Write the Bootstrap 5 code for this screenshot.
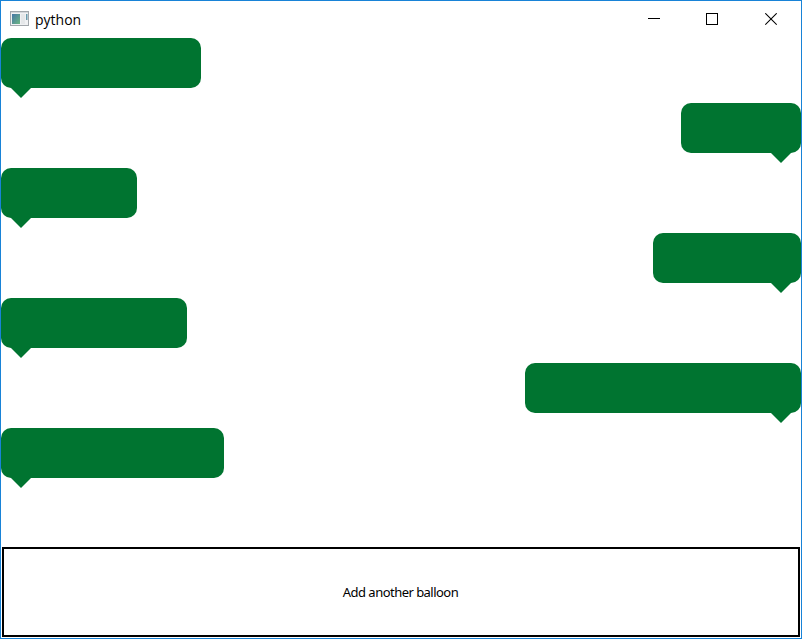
<!DOCTYPE html>
<html lang="en">
<head>
<meta charset="utf-8">
<title>python</title>
<link href="https://cdn.jsdelivr.net/npm/bootstrap@5.3.0/dist/css/bootstrap.min.css" rel="stylesheet">
<style>
  body { font-family: "Open Sans", "Noto Sans", sans-serif; color: #000; }
  .window { border: 1px solid #1883d7; }
  .titlebar { height: 37px; padding-left: 9px; }
  .app-icon { margin-right: 6px; }
  .title-text { font-size: 14px; line-height: 20px; letter-spacing: 0; }
  .win-btn { width: 58px; height: 37px; border-radius: 0; }
  .win-btn:last-child { width: 60px; }
  .balloons { gap: 15px; }
  .balloon { height: 50px; border-radius: 10px; background: #007430; }
  .balloon::after {
    content: ""; position: absolute; top: 50px; left: 10px;
    border: 10px solid transparent; border-top-color: #007430; border-bottom: 0;
  }
  .balloon.sent::after { left: auto; right: 10px; }
  .w-a { width: 200px; } .w-b { width: 120px; } .w-c { width: 136px; }
  .w-d { width: 148px; } .w-e { width: 186px; } .w-f { width: 276px; } .w-g { width: 223px; }
  .add-btn {
    height: 90px; margin: 0 1px 1px; padding: 2px 1px 0 0; border: 2px solid #000; border-radius: 0;
    font-family: "Noto Sans", sans-serif; font-size: 13px; letter-spacing: -.53px; color: #000;
  }
</style>
<script src="https://cdn.jsdelivr.net/npm/bootstrap@5.3.0/dist/js/bootstrap.bundle.min.js"></script>
</head>
<body class="bg-white overflow-hidden">
<div class="window vh-100 d-flex flex-column">
  <header class="titlebar d-flex align-items-center flex-shrink-0">
    <svg class="app-icon" width="19" height="17" viewBox="0 0 19 17">
      <defs><linearGradient id="pane" x1="0" y1="0" x2="1" y2="1"><stop offset="0" stop-color="#4576a6"/><stop offset="1" stop-color="#6db783"/></linearGradient></defs>
      <rect x=".5" y=".5" width="18" height="14" fill="#f0f1f3" stroke="#a2a7ac"/>
      <path d="M1 1.5h17" stroke="#d5d8dc"/>
      <rect x="2" y="3" width="8" height="10" fill="url(#pane)"/>
      <rect x="11" y="3" width="4" height="10" fill="#e5e7e9"/>
      <rect x="16" y="3" width="1.5" height="6" fill="#6a9bad"/>
    </svg>
    <span class="title-text">python</span>
    <div class="d-flex ms-auto">
      <button class="win-btn btn border-0 p-0 d-flex align-items-center justify-content-center" aria-label="Minimize">
        <svg width="12" height="13"><path d="M0 5.5h12" stroke="#000"/></svg>
      </button>
      <button class="win-btn btn border-0 p-0 d-flex align-items-center justify-content-center" aria-label="Maximize">
        <svg width="12" height="13"><rect x=".5" y=".5" width="11" height="11" fill="none" stroke="#000"/></svg>
      </button>
      <button class="win-btn btn border-0 p-0 d-flex align-items-center justify-content-center" aria-label="Close">
        <svg width="12" height="13"><path d="M.3.3l11.4 11.4M11.7.3L.3 11.7" stroke="#000" stroke-width="1.1"/></svg>
      </button>
    </div>
  </header>
  <main class="balloons d-flex flex-column flex-grow-1">
    <div class="balloon position-relative align-self-start w-a"></div>
    <div class="balloon sent position-relative align-self-end w-b"></div>
    <div class="balloon position-relative align-self-start w-c"></div>
    <div class="balloon sent position-relative align-self-end w-d"></div>
    <div class="balloon position-relative align-self-start w-e"></div>
    <div class="balloon sent position-relative align-self-end w-f"></div>
    <div class="balloon position-relative align-self-start w-g"></div>
  </main>
  <button class="add-btn btn bg-white flex-shrink-0">Add another balloon</button>
</div>
</body>
</html>
